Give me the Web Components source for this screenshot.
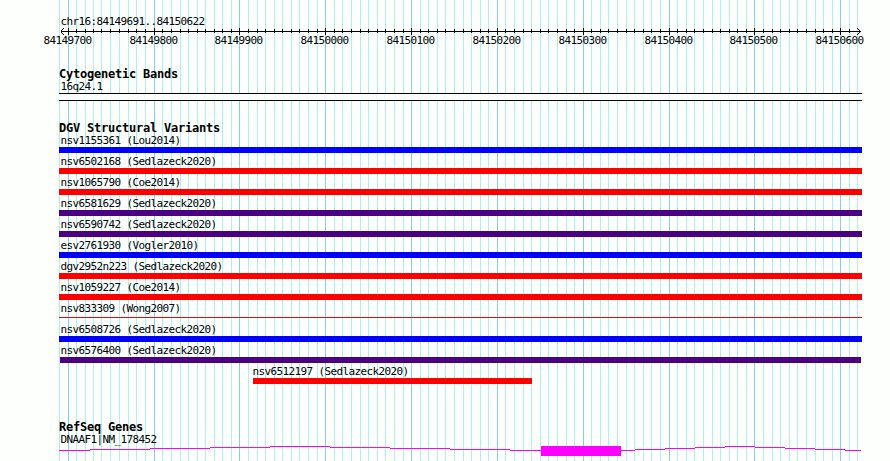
<!DOCTYPE html>
<html lang="en"><head><meta charset="utf-8"><title>Genome browser</title>
<style>html,body{margin:0;background:#fdfffd}</style></head><body>
<genome-browser></genome-browser>
<script>
const textCSS = `font:11px/12px "DejaVu Sans Mono",monospace;letter-spacing:-.622px;white-space:pre;color:#000;`;
const MAJOR = [68,154,239,325,411,497,583,669,754,840];
const GRID = [59,68,76,85,93,101,110,119,128,136,145,154,162,171,180,188,197,205,214,222,231,239,248,257,265,274,282,291,299,308,317,325,334,342,351,360,368,377,385,394,403,411,420,428,437,445,454,463,471,480,488,497,505,514,523,531,540,548,557,566,574,583,591,600,608,617,626,634,643,651,660,669,677,686,694,703,712,720,729,737,746,754,763,772,780,789,797,806,815,823,832,840,849,857];
const make = (name, html) => customElements.define(name, class extends HTMLElement {
  connectedCallback(){
    this.attachShadow({mode:'open'}).innerHTML = html(this);
  }
});
make('grid-lines', () => `<style>:host{display:block;position:absolute;inset:0}svg{display:block}</style>
<svg width="890" height="461" shape-rendering="crispEdges">${GRID.map(x=>`<rect x="${x}" width="1" height="461" fill="${MAJOR.includes(x)?'#87ceeb':'#afeeee'}"/>`).join('')}</svg>`);
make('scale-ruler', () => `<style>:host{display:block;height:44px;position:relative}svg{position:absolute;left:0;top:0}
.r{${textCSS}position:absolute;left:60.5px;top:16px}.t{${textCSS}position:absolute;top:35px}</style>
<svg width="890" height="44" shape-rendering="crispEdges"><rect x="61" y="31" width="800" height="1"/>
${GRID.filter(x=>x>59&&x<857).map(x=>MAJOR.includes(x)?`<rect x="${x}" y="28" width="1" height="7"/>`:`<rect x="${x}" y="29" width="1" height="4"/>`).join('')}
${[1,2,3].map(d=>[31-d,31+d].map(y=>`<rect x="${60+d}" y="${y}" width="1" height="1"/><rect x="${860-d}" y="${y}" width="1" height="1"/>`).join('')).join('')}</svg>
<div class="r">chr16:84149691..84150622</div>
${MAJOR.map((x,i)=>`<div class="t" style="left:${x-24.5}px">${84149700+i*100}</div>`).join('')}`);
make('track-heading', () => `<style>:host{display:block;height:12px;font:bold 12px/12px "DejaVu Sans Mono",monospace;letter-spacing:-.224px;white-space:pre;padding-left:59px}</style><slot></slot>`);
make('track-label', () => `<style>:host{display:block;height:12px;padding:1px 0 0 60.5px;${textCSS}}</style><slot></slot>`);
make('variant-row', h => {
  const c=h.getAttribute('color'), x=+(h.getAttribute('start')||59), e=+(h.getAttribute('end')||862), t=+(h.getAttribute('thick')||6);
  return `<style>:host{display:flex;flex-direction:column;height:21px}.n{${textCSS}height:12px;padding:1px 0 0 ${x>100?x-.5:60.5}px}
.b{height:${t}px;background:${c};margin:${t===1?2:0}px 0 0 ${x}px;width:${e-x}px}</style><div class="n"><slot></slot></div><div class="b"></div>`;
});
make('band-box', () => `<style>:host{display:block;box-sizing:border-box;height:8px;width:803px;margin-left:59px;border:solid #000;border-width:1px 0;background:#fdfffd}</style>`);
make('gene-model', () => {
  const s=[[59,90,450],[90,150,449],[150,210,448],[210,270,447],[270,330,446],[330,390,447],[390,450,448],[450,510,449],[510,541,450],[621,635,450],[635,665,449],[665,695,448],[695,725,447],[725,755,446],[755,785,447],[785,815,448],[815,845,449],[845,861,450]];
  return `<style>:host{display:block;height:10px}svg{display:block}</style><svg width="890" height="10" fill="#f0f" shape-rendering="crispEdges">${s.map(([a,b,y])=>`<rect x="${a}" y="${y-446}" width="${b-a}" height="1"/>`).join('')}<rect x="541" width="80" height="10"/></svg>`;
});
make('genome-browser', () => `<style>:host{display:block;position:relative;width:890px;height:461px;overflow:hidden;background:#fdfffd}
main{position:relative;display:flex;flex-direction:column}
.c{margin-top:24px}.d{margin-top:21px}.r{margin-top:35px}</style>
<grid-lines></grid-lines><main><scale-ruler></scale-ruler>
<track-heading class="c">Cytogenetic Bands</track-heading><track-label>16q24.1</track-label><band-box></band-box>
<track-heading class="d">DGV Structural Variants</track-heading>
<variant-row color="#00f">nsv1155361 (Lou2014)</variant-row>
<variant-row color="#f00">nsv6502168 (Sedlazeck2020)</variant-row>
<variant-row color="#f00">nsv1065790 (Coe2014)</variant-row>
<variant-row color="#4b0082">nsv6581629 (Sedlazeck2020)</variant-row>
<variant-row color="#4b0082">nsv6590742 (Sedlazeck2020)</variant-row>
<variant-row color="#00f">esv2761930 (Vogler2010)</variant-row>
<variant-row color="#f00">dgv2952n223 (Sedlazeck2020)</variant-row>
<variant-row color="#f00">nsv1059227 (Coe2014)</variant-row>
<variant-row color="#f00" thick="1">nsv833309 (Wong2007)</variant-row>
<variant-row color="#00f">nsv6508726 (Sedlazeck2020)</variant-row>
<variant-row color="#4b0082" start="60" end="861">nsv6576400 (Sedlazeck2020)</variant-row>
<variant-row color="#f00" start="253" end="532">nsv6512197 (Sedlazeck2020)</variant-row>
<track-heading class="r">RefSeq Genes</track-heading><track-label>DNAAF1|NM_178452</track-label><gene-model></gene-model></main>`);
</script></body></html>
